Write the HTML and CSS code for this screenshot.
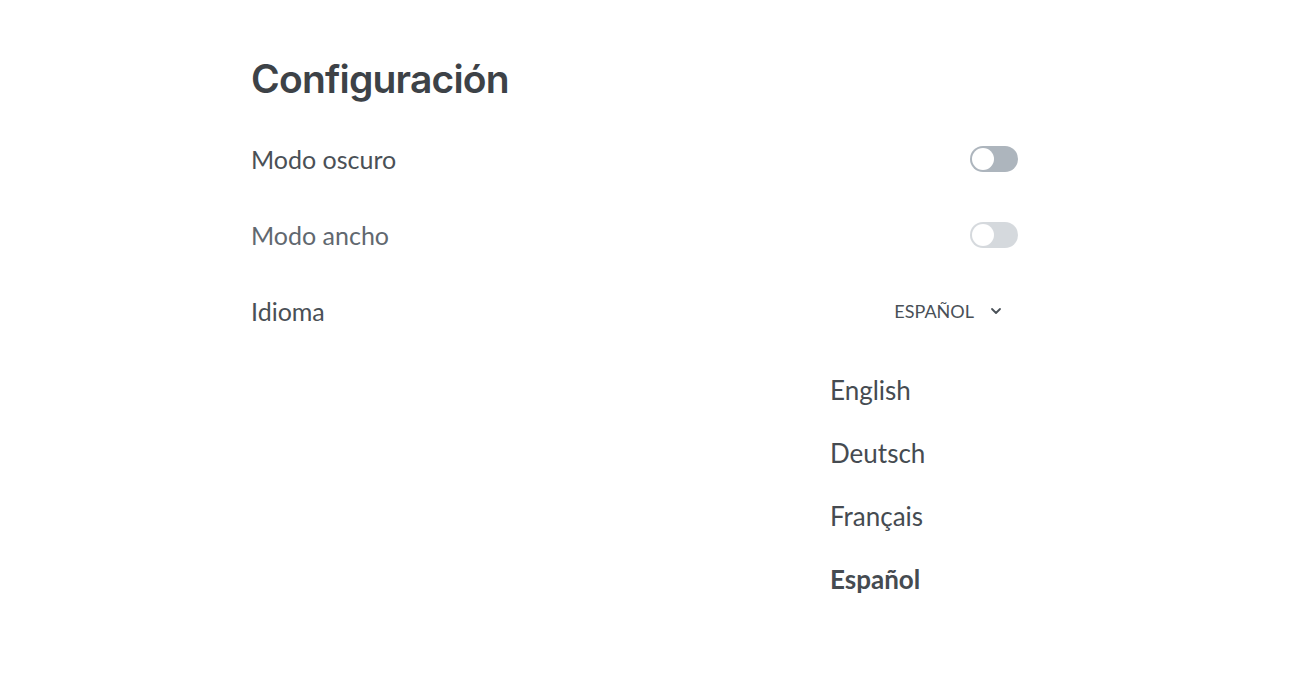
FILE: index.html
```html
<!DOCTYPE html>
<html lang="es">
<head>
<meta charset="utf-8">
<title>Configuración</title>
<link rel="stylesheet" href="styles.css">
</head>
<body>
<main class="settings">
  <h1 class="title">Configuración</h1>
  <div class="row">
    <span class="label">Modo oscuro</span>
    <span class="switch"><span class="knob"></span></span>
  </div>
  <div class="row disabled">
    <span class="label">Modo ancho</span>
    <span class="switch"><span class="knob"></span></span>
  </div>
  <div class="row">
    <span class="label">Idioma</span>
    <button class="dropdown-btn" type="button">
      <span>Español</span>
      <svg class="chevron" width="12" height="8" viewBox="0 0 12 8"><path d="M2 2l4 4 4-4" fill="none" stroke="#495057" stroke-width="1.8" stroke-linecap="round" stroke-linejoin="round"/></svg>
    </button>
  </div>
  <div class="menu-wrap">
    <ul class="menu">
      <li class="item">English</li>
      <li class="item">Deutsch</li>
      <li class="item">Français</li>
      <li class="item active">Español</li>
    </ul>
  </div>
</main>
</body>
</html>
```
FILE: styles.css
```css
html, body {
  margin: 0;
  padding: 0;
  background: #ffffff;
}
body {
  font-family: "Lato", "Noto Sans", sans-serif;
  color: #495057;
}
.settings {
  width: 767px;
  margin-left: 251px;
  padding-top: 55px;
}
.title {
  font-family: "Inter", "Liberation Sans", sans-serif;
  font-weight: 600;
  font-size: 39px;
  line-height: 48px;
  letter-spacing: -0.8px;
  color: #3d4247;
  margin: 0 0 18px 0;
}
.row {
  display: flex;
  align-items: center;
  justify-content: space-between;
  height: 76px;
}
.label {
  font-size: 25px;
  color: #4a5056;
}
.disabled .label {
  color: #61686f;
}
.switch {
  position: relative;
  display: inline-block;
  width: 48px;
  height: 26px;
  border-radius: 13px;
  background: #adb5bd;
}
.disabled .switch {
  opacity: 0.5;
}
.knob {
  position: absolute;
  left: 2px;
  top: 2px;
  width: 22px;
  height: 22px;
  border-radius: 50%;
  background: #ffffff;
}
.dropdown-btn {
  display: flex;
  align-items: center;
  gap: 16px;
  border: 0;
  background: transparent;
  padding: 6px 16px 6px 16px;
  font-family: "Lato", "Noto Sans", sans-serif;
  font-size: 18px;
  text-transform: uppercase;
  color: #495057;
}
.menu-wrap {
  display: flex;
  justify-content: flex-end;
  padding-top: 10px;
}
.menu {
  width: 204px;
  margin: 0;
  padding: 0;
  list-style: none;
}
.item {
  height: 63px;
  line-height: 63px;
  padding-left: 16px;
  font-size: 26px;
  color: #454b51;
}
.item.active {
  font-weight: 700;
}
```
